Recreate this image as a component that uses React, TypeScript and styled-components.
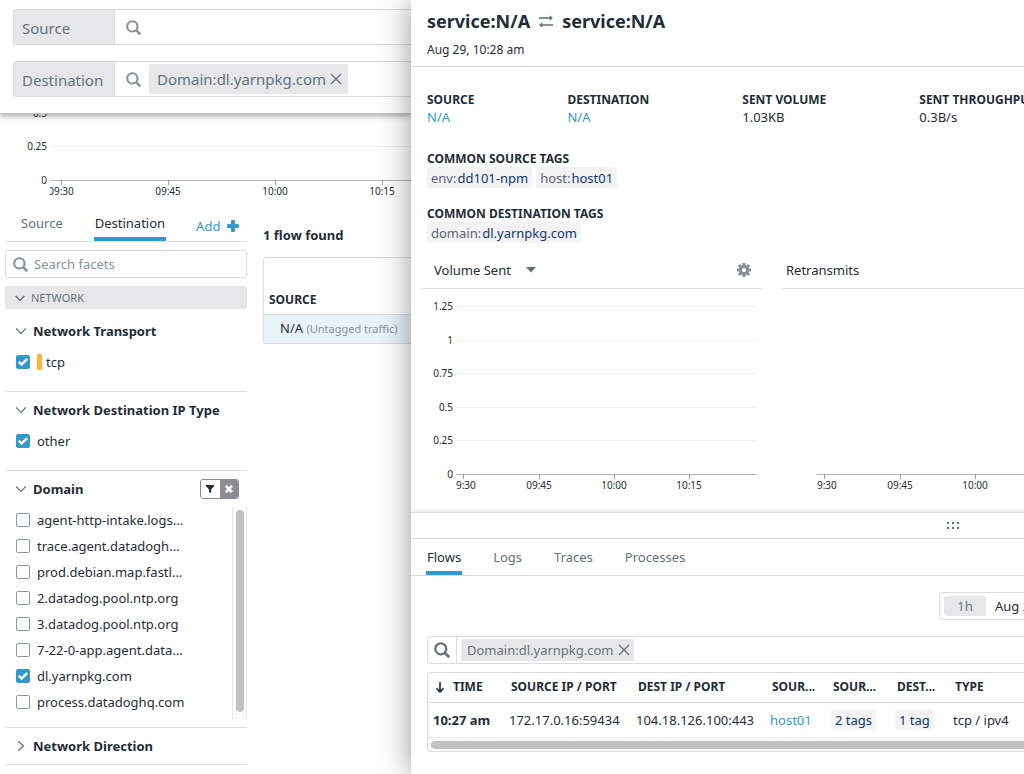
import React from "react";
import styled, { createGlobalStyle, css } from "styled-components";

const ink = "#1f2d36";
const muted = "#65727b";
const faint = "#87929a";
const blue = "#3399cc";
const line = "#dcdcdf";
const fill = "#e7e7ea";

const GlobalStyle = createGlobalStyle`
  *, *::before, *::after { box-sizing: border-box; }
  body {
    margin: 0;
    background: #fff;
    color: ${ink};
    font: 13px/18px "Noto Sans", "Open Sans", sans-serif;
  }
  button, input, select { font: inherit; color: inherit; margin: 0; }
  button { padding: 0; border: 0; background: none; cursor: pointer; }
  a { color: ${blue}; text-decoration: none; }
  h1, h2, h3, p, dl, dd, ul, fieldset { margin: 0; padding: 0; border: 0; }
  svg { display: block; flex: none; }
`;

const Page = styled.div`
  display: grid;
  grid-template-columns: 411px minmax(0, 1fr);
  min-height: 100vh;
  overflow: hidden;
`;

/* ---------- icons ---------- */

const SearchIcon = ({ size = 15, color = faint }: { size?: number; color?: string }) => (
  <svg width={size} height={size} viewBox="0 0 16 16" fill="none" stroke={color} aria-hidden="true">
    <circle cx="6.8" cy="6.8" r="5.5" strokeWidth="2.3" />
    <path d="M10.8 10.8 15.2 15.2" strokeWidth="2.8" />
  </svg>
);

const CloseIcon = ({ size = 12 }: { size?: number }) => (
  <svg width={size} height={size} viewBox="0 0 12 12" fill="none" stroke={muted} strokeWidth="1.3" aria-hidden="true">
    <path d="M1 1 11 11M11 1 1 11" />
  </svg>
);

const Chevron = ({ open = true, small }: { open?: boolean; small?: boolean }) => (
  <svg width="12" height="12" viewBox="0 0 12 12" fill="none" stroke={muted} strokeWidth={small ? 1.5 : 1.3} aria-hidden="true">
    <path d={small ? "M1.8 4 6 8.4 10.2 4" : open ? "M1.2 3.4 6 8.6 10.8 3.4" : "M3.2 1.2 8.4 6 3.2 10.8"} />
  </svg>
);

const PlusIcon = () => (
  <svg width="12" height="12" viewBox="0 0 12 12" fill={blue} aria-hidden="true">
    <rect x="4" y="0" width="4" height="12" rx="1" />
    <rect x="0" y="4" width="12" height="4" rx="1" />
  </svg>
);

const FunnelIcon = () => (
  <svg width="10" height="10" viewBox="0 0 10 10" fill={ink} aria-hidden="true">
    <path d="M1 1h8v1.2L6.2 5.2V9.2L3.9 7.8V5.2L1 2.2z" />
  </svg>
);

const HeavyCross = () => (
  <svg width="8" height="8" viewBox="0 0 8 8" stroke="#fff" strokeWidth="2.6" aria-hidden="true">
    <path d="M.9.9 7.1 7.1M7.1.9.9 7.1" />
  </svg>
);

const SwapIcon = () => (
  <svg width="14" height="14" viewBox="0 0 14 14" aria-hidden="true">
    <g fill="none" stroke={faint} strokeWidth="1.8">
      <path d="M0 4H12M2 11H14" />
    </g>
    <path d="M10.6 1.2 14 4 10.6 6.8zM3.4 8.2 0 11l3.4 2.8z" fill={muted} />
  </svg>
);

const GearIcon = () => (
  <svg width="14" height="14" viewBox="-7 -7 14 14" aria-hidden="true">
    {[0, 45, 90, 135].map((angle) => (
      <rect key={angle} x="-1.5" y="-7" width="3" height="14" rx=".4" fill={faint} transform={`rotate(${angle})`} />
    ))}
    <circle r="5" fill={faint} />
    <circle r="2" fill="#fff" />
  </svg>
);

const GripIcon = () => (
  <svg width="12" height="8" viewBox="0 0 12 8" fill={muted} aria-hidden="true">
    {[0, 5, 10].map((x) => (
      <React.Fragment key={x}>
        <rect x={x} y="0" width="2" height="2" />
        <rect x={x} y="5" width="2" height="2" />
      </React.Fragment>
    ))}
  </svg>
);

const SortArrow = () => (
  <svg width="8" height="11" viewBox="0 0 8 11" fill="none" stroke={ink} strokeWidth="1.6" aria-hidden="true">
    <path d="M4 0V10M.6 6.4 4 9.9 7.4 6.4" />
  </svg>
);

/* ---------- search bars ---------- */

const Background = styled.main`
  display: flex;
  flex-direction: column;
  overflow: hidden;
`;

const QueryBar = styled.header`
  position: relative;
  z-index: 1;
  display: flex;
  flex-direction: column;
  gap: 16px;
  padding: 9px 0 16px 13px;
  background: #fff;
  border-bottom: 1px solid #c4c4c7;
  box-shadow: 0 2px 6px rgba(0, 0, 0, 0.35);
`;

const QueryField = styled.div`
  display: flex;
  height: 36px;
  border: 1px solid ${line};
  border-right: 0;
  border-radius: 3px 0 0 3px;
  align-items: center;
  font-size: 15px;
  color: ${muted};
`;

const QueryLabel = styled.label`
  align-self: stretch;
  display: flex;
  align-items: center;
  width: 101px;
  padding: 2px 0 0 8px;
  margin-right: 11px;
  background: ${fill};
  border-right: 1px solid ${line};
`;

const Chip = styled.span<{ $large?: boolean }>`
  display: flex;
  align-items: center;
  gap: 4px;
  flex: none;
  height: ${(p) => (p.$large ? 30 : 22)}px;
  padding: 0 ${(p) => (p.$large ? "6px 0 8px" : "4px 0 6px")};
  margin-left: ${(p) => (p.$large ? 8 : 4)}px;
  background: ${fill};
  border-radius: 2px;
  color: ${muted};
`;

const BareInput = styled.input`
  flex: 1;
  min-width: 0;
  height: 100%;
  padding: 0 6px;
  border: 0;
  outline: 0;
  background: none;

  &::placeholder {
    color: ${faint};
    opacity: 1;
  }
`;

/* ---------- charts ---------- */

const Plot = styled.svg<{ $height: number }>`
  width: 100%;
  height: ${(p) => p.$height}px;
  overflow: hidden;
  font-size: 10px;

  text {
    fill: ${ink};
  }
`;

type Mark = [number, string];

function AxisPlot({
  height, left, right = 0, rows, ticks, base, label,
}: {
  height: number; left: number; right?: number; rows: Mark[]; ticks: Mark[]; base: number; label: string;
}) {
  return (
    <Plot $height={height} role="img" aria-label={label}>
      {rows.map(([y, text]) => (
        <text key={text} x={left - 3} y={y + 4} textAnchor="end">{text}</text>
      ))}
      <svg x={left} style={{ width: `calc(100% - ${left + right}px)` }} height={height}>
        {rows.map(([y, text]) =>
          y === base ? null : <rect key={text} x="0" y={y} width="100%" height="1" fill="#efeff0" />
        )}
        <rect x="0" y={base} width="100%" height="1" fill="#b4b4b6" />
        {ticks.map(([x, text]) => (
          <React.Fragment key={text}>
            <rect x={x - left} y={base} width="1" height="5" fill="#a0a0a3" />
            <text x={x - left} y={base + 15} textAnchor="middle">{text}</text>
          </React.Fragment>
        ))}
      </svg>
    </Plot>
  );
}

/* ---------- facets ---------- */

const Columns = styled.div`
  display: flex;
  gap: 16px;
  padding-left: 5px;
`;

const Sidebar = styled.aside`
  flex: none;
  width: 242px;
`;

const FacetTabs = styled.nav`
  display: flex;
  height: 37px;
  padding: 0 11px 0 15px;
  gap: 30px;
  border-bottom: 1px solid ${line};
`;

const tabStyle = css<{ $active?: boolean }>`
  padding: 4px 1px 0;
  color: ${(p) => (p.$active ? ink : muted)};
  border-bottom: 4px solid ${(p) => (p.$active ? blue : "transparent")};
`;

const FacetTab = styled.button<{ $active?: boolean }>`
  ${tabStyle}
`;

const AddButton = styled.button`
  display: flex;
  align-items: center;
  gap: 7px;
  padding: 6px 4px 0 0;
  margin-left: auto;
  height: 36px;
  color: ${blue};
  white-space: nowrap;
`;

const FacetSearch = styled.div`
  display: flex;
  align-items: center;
  height: 28px;
  margin: 8px 0;
  padding-left: 7px;
  border: 1px solid ${line};
  border-radius: 3px;
`;

const GroupHeader = styled.button`
  display: flex;
  align-items: center;
  gap: 5px;
  width: 100%;
  height: 23px;
  padding-left: 9px;
  margin-bottom: 4px;
  background: ${fill};
  border-radius: 2px;
  color: ${muted};
  font-size: 11px;
`;

const Facet = styled.section<{ $bottom?: number }>`
  padding-bottom: ${(p) => p.$bottom ?? 0}px;
  border-bottom: 1px solid ${line};
`;

const FacetHead = styled.div`
  display: flex;
  align-items: center;
  justify-content: space-between;
  height: 36px;
  padding: 0 8px 0 10px;
`;

const FacetToggle = styled.button`
  display: flex;
  align-items: center;
  gap: 6px;
  font-weight: 700;
`;

const FacetActions = styled.div`
  display: flex;
  width: 39px;
  height: 20px;
  border: 1px solid #8e8c93;
  border-radius: 3px;
  overflow: hidden;
`;

const FacetAction = styled.button<{ $dark?: boolean }>`
  display: grid;
  place-items: center;
  flex: 1;
  background: ${(p) => (p.$dark ? "#8e8c93" : "#fff")};
`;

const Option = styled.label`
  display: flex;
  align-items: center;
  gap: 7px;
  height: 26px;
  padding-left: 11px;
`;

const Tick = styled.span`
  display: grid;
  flex: none;
  place-items: center;

  > * {
    grid-area: 1 / 1;
  }
  svg {
    pointer-events: none;
  }
`;

const TickInput = styled.input`
  appearance: none;
  width: 14px;
  height: 14px;
  border: 1px solid #8d979e;
  border-radius: 2px;
  background: #fff;

  &:checked {
    border-color: ${blue};
    background: ${blue};
  }
`;

const Swatch = styled.span`
  width: 5px;
  height: 16px;
  margin-right: -3px;
  background: #ffb32e;
  border-radius: 1px;
`;

const OptionScroller = styled.div`
  display: flex;
  justify-content: space-between;
  height: 212px;
`;

const ScrollTrack = styled.div<{ $horizontal?: boolean }>`
  background: #fafafa;
  ${(p) =>
    p.$horizontal
      ? css`
          height: 14px;
          padding: 3px;
          border-top: 1px solid #e8e8e8;
        `
      : css`
          width: 15px;
          padding: 3px 2px 7px 3px;
          border: solid #e8e8e8;
          border-width: 0 1px;
        `}
`;

const ScrollThumb = styled.div`
  height: 100%;
  min-height: 8px;
  background: #c1c1c1;
  border-radius: 4px;
`;

function CheckOption({ name, checked, swatch }: { name: string; checked?: boolean; swatch?: boolean }) {
  return (
    <Option>
      <Tick>
        <TickInput type="checkbox" defaultChecked={checked} />
        <svg width="10" height="8" viewBox="0 0 10 8" fill="none" stroke="#fff" strokeWidth="2.4" aria-hidden="true">
          <path d="M.8 3.8 3.6 6.4 9.2 1" />
        </svg>
      </Tick>
      {swatch && <Swatch />}
      <span>{name}</span>
    </Option>
  );
}

/* ---------- flow list ---------- */

const Results = styled.section`
  flex: 1;
  min-width: 0;
  padding-top: 21px;
`;

const ResultCount = styled.h2`
  font-size: 13px;
  line-height: 18px;
  margin-bottom: 13px;
`;

const ResultBox = styled.div`
  border: 1px solid ${line};
  border-right: 0;
  border-radius: 3px 0 0 3px;
  overflow: hidden;
`;

const ResultTable = styled.table`
  width: 100%;
  border-collapse: collapse;
  text-align: left;

  th {
    height: 56px;
    padding: 0 0 5px 5px;
    vertical-align: bottom;
    font-size: 12px;
    border-bottom: 1px solid ${line};
  }
  td {
    height: 29px;
    padding: 0 0 0 16px;
    background: #e9f3fa;
  }
  small {
    font-size: 11px;
    color: ${faint};
  }
`;

/* ---------- drawer ---------- */

const Drawer = styled.aside`
  position: relative;
  z-index: 2;
  overflow: hidden;
  background: #fff;
  box-shadow: 0 0 30px rgba(0, 0, 0, 0.4);
`;

const DrawerBody = styled.div`
  min-width: 1084px;
`;

const DrawerHead = styled.header`
  padding: 9px 16px 7px;
  border-bottom: 1px solid ${line};
  font-size: 12px;
`;

const Title = styled.h1`
  display: flex;
  align-items: center;
  gap: 9px;
  margin-bottom: 8px;
  font-size: 18px;
  line-height: 24px;
`;

const Summary = styled.div`
  display: flex;
  flex-direction: column;
  gap: 17px;
  padding: 24px 16px 11px;
`;

const Stats = styled.dl`
  display: flex;
  gap: 93px;
  padding-bottom: 7px;
`;

const Caption = styled.dt`
  font-size: 12px;
  line-height: 17px;
  font-weight: 700;
`;

const Tags = styled.dd`
  display: flex;
  gap: 4px;
`;

const Tag = styled.span`
  display: inline-flex;
  align-items: center;
  gap: 1px;
  height: 21px;
  padding: 0 4px;
  background: #f3f3f4;
  border-radius: 3px;
  color: #0f3573;

  i {
    font-style: normal;
    color: #5a6478;
  }
`;

const Charts = styled.div`
  display: grid;
  grid-template-columns: repeat(3, minmax(0, 1fr));
  gap: 20px;
  padding: 0 11px 0 10px;
`;

const ChartHead = styled.div`
  display: flex;
  align-items: center;
  justify-content: space-between;
  height: 35px;
  padding: 0 11px 2px 4px;
  border-bottom: 1px solid ${line};
`;

const MetricPicker = styled.label`
  display: flex;
  align-items: center;

  select {
    appearance: none;
    border: 0;
    padding: 0 7px 0 9px;
    background: none;
    outline: 0;
  }
  svg {
    margin-left: 8px;
  }
`;

const Handle = styled.div`
  display: flex;
  justify-content: center;
  align-items: center;
  height: 27px;
  border: solid ${line};
  border-width: 1px 0;
  box-shadow: 0 -2px 4px rgba(0, 0, 0, 0.08);
`;

const DetailTabs = styled.nav`
  display: flex;
  gap: 30px;
  height: 37px;
  padding-left: 15px;
  border-bottom: 1px solid ${line};
`;

const DetailTab = styled.button<{ $active?: boolean }>`
  ${tabStyle}
`;

const Detail = styled.div`
  padding: 16px 16px 0;
`;

const TimeRange = styled.button`
  display: flex;
  align-items: center;
  gap: 9px;
  width: 540px;
  height: 28px;
  margin: 0 0 16px auto;
  padding: 0 4px;
  border: 1px solid ${line};
  border-radius: 3px;
`;

const Span = styled.span`
  width: 42px;
  padding: 1px 0;
  background: ${fill};
  border-radius: 3px;
  color: ${muted};
`;

const FlowSearch = styled.div`
  display: flex;
  align-items: center;
  height: 28px;
  margin-bottom: 8px;
  border: 1px solid ${line};
  border-radius: 3px;
`;

const FlowSearchIcon = styled.span`
  display: grid;
  place-items: center;
  align-self: stretch;
  width: 29px;
  border-right: 1px solid ${line};
`;

const FlowBox = styled.div`
  border: 1px solid ${line};
  border-radius: 3px;
  overflow: hidden;
`;

const FlowTable = styled.table`
  width: 100%;
  table-layout: fixed;
  border-collapse: collapse;
  text-align: left;

  th, td {
    white-space: nowrap;
    overflow: hidden;
    text-overflow: ellipsis;
  }
  th {
    height: 29px;
    padding: 0 8px;
    font-size: 12px;
    border-bottom: 1px solid ${line};
  }
  td {
    height: 35px;
    padding: 0 6px;
  }
  td:first-child {
    padding: 0 5px;
    font-weight: 700;
  }
`;

const SortHead = styled.button`
  display: flex;
  align-items: center;
  gap: 9px;
  font-weight: 700;
`;

const domains: [string, boolean?][] = [
  ["agent-http-intake.logs..."],
  ["trace.agent.datadogh..."],
  ["prod.debian.map.fastl..."],
  ["2.datadog.pool.ntp.org"],
  ["3.datadog.pool.ntp.org"],
  ["7-22-0-app.agent.data..."],
  ["dl.yarnpkg.com", true],
  ["process.datadoghq.com"],
];

const plotTicks: Mark[] = [[42, "09:30"], [118, "09:45"], [193, "10:00"], [268, "10:15"]];
const volumeRows: Mark[] = [[17, "1.25"], [51, "1"], [84, "0.75"], [118, "0.5"], [151, "0.25"], [185, "0"]];

const flowColumns: [string, number | undefined][] = [
  ["SOURCE IP / PORT", 127],
  ["DEST IP / PORT", 134],
  ["SOUR...", 61],
  ["SOUR...", 64],
  ["DEST...", 58],
  ["TYPE", undefined],
];

function DomainChip({ large }: { large?: boolean }) {
  return (
    <Chip $large={large}>
      Domain:dl.yarnpkg.com
      <button type="button" aria-label="Remove filter">
        <CloseIcon size={12} />
      </button>
    </Chip>
  );
}

export default function App() {
  return (
    <Page>
      <GlobalStyle />
      <Background>
        <QueryBar>
          <QueryField>
            <QueryLabel htmlFor="source">Source</QueryLabel>
            <SearchIcon />
            <BareInput id="source" />
          </QueryField>
          <QueryField>
            <QueryLabel htmlFor="destination">Destination</QueryLabel>
            <SearchIcon />
            <DomainChip large />
            <BareInput id="destination" />
          </QueryField>
        </QueryBar>
        <AxisPlot
          label="Volume over time"
          height={91}
          left={50}
          base={66}
          rows={[[-1, "0.5"], [32, "0.25"], [66, "0"]]}
          ticks={[[61, "09:30"], [168, "09:45"], [275, "10:00"], [382, "10:15"]]}
        />
        <Columns>
          <Sidebar>
            <FacetTabs>
              <FacetTab type="button">Source</FacetTab>
              <FacetTab type="button" $active>Destination</FacetTab>
              <AddButton type="button">Add <PlusIcon /></AddButton>
            </FacetTabs>
            <FacetSearch>
              <SearchIcon />
              <BareInput placeholder="Search facets" aria-label="Search facets" />
            </FacetSearch>
            <GroupHeader type="button"><Chevron small /> NETWORK</GroupHeader>
            <Facet $bottom={16}>
              <FacetHead><FacetToggle type="button"><Chevron /> Network Transport</FacetToggle></FacetHead>
              <CheckOption name="tcp" checked swatch />
            </Facet>
            <Facet $bottom={16}>
              <FacetHead><FacetToggle type="button"><Chevron /> Network Destination IP Type</FacetToggle></FacetHead>
              <CheckOption name="other" checked />
            </Facet>
            <Facet $bottom={8}>
              <FacetHead>
                <FacetToggle type="button"><Chevron /> Domain</FacetToggle>
                <FacetActions>
                  <FacetAction type="button" aria-label="Filter"><FunnelIcon /></FacetAction>
                  <FacetAction type="button" aria-label="Clear" $dark><HeavyCross /></FacetAction>
                </FacetActions>
              </FacetHead>
              <OptionScroller>
                <div>
                  {domains.map(([name, checked]) => <CheckOption key={name} name={name} checked={checked} />)}
                </div>
                <ScrollTrack><ScrollThumb /></ScrollTrack>
              </OptionScroller>
            </Facet>
            <Facet>
              <FacetHead><FacetToggle type="button"><Chevron open={false} /> Network Direction</FacetToggle></FacetHead>
            </Facet>
          </Sidebar>
          <Results>
            <ResultCount>1 flow found</ResultCount>
            <ResultBox>
              <ResultTable>
                <thead><tr><th>SOURCE</th></tr></thead>
                <tbody><tr><td>N/A <small>(Untagged traffic)</small></td></tr></tbody>
              </ResultTable>
            </ResultBox>
          </Results>
        </Columns>
      </Background>

      <Drawer>
        <DrawerBody>
          <DrawerHead>
            <Title>service:N/A <SwapIcon /> service:N/A</Title>
            <p>Aug 29, 10:28 am</p>
          </DrawerHead>
          <Summary>
            <Stats>
              <div><Caption>SOURCE</Caption><dd><a href="#source-service">N/A</a></dd></div>
              <div><Caption>DESTINATION</Caption><dd><a href="#destination-service">N/A</a></dd></div>
              <div><Caption>SENT VOLUME</Caption><dd>1.03KB</dd></div>
              <div><Caption>SENT THROUGHPUT</Caption><dd>0.3B/s</dd></div>
            </Stats>
            <dl>
              <Caption>COMMON SOURCE TAGS</Caption>
              <Tags>
                <Tag><i>env:</i>dd101-npm</Tag>
                <Tag><i>host:</i>host01</Tag>
              </Tags>
            </dl>
            <dl>
              <Caption>COMMON DESTINATION TAGS</Caption>
              <Tags><Tag><i>domain:</i>dl.yarnpkg.com</Tag></Tags>
            </dl>
          </Summary>
          <Charts>
            <section>
              <ChartHead>
                <MetricPicker>
                  <select aria-label="Metric"><option>Volume Sent</option></select>
                  <svg width="10" height="6" viewBox="0 0 10 6" fill={muted} aria-hidden="true"><path d="M0 0H10L5 5.6z" /></svg>
                </MetricPicker>
                <button type="button" aria-label="Chart settings"><GearIcon /></button>
              </ChartHead>
              <AxisPlot label="Volume Sent" height={223} left={35} right={5} base={185} rows={volumeRows} ticks={plotTicks} />
            </section>
            <section>
              <ChartHead>Retransmits</ChartHead>
              <AxisPlot label="Retransmits" height={223} left={35} right={5} base={185} rows={[]} ticks={plotTicks} />
            </section>
          </Charts>
          <Handle><GripIcon /></Handle>
          <DetailTabs>
            <DetailTab type="button" $active>Flows</DetailTab>
            <DetailTab type="button">Logs</DetailTab>
            <DetailTab type="button">Traces</DetailTab>
            <DetailTab type="button">Processes</DetailTab>
          </DetailTabs>
          <Detail>
            <TimeRange type="button"><Span>1h</Span>Aug 29</TimeRange>
            <FlowSearch>
              <FlowSearchIcon><SearchIcon size={16} color={muted} /></FlowSearchIcon>
              <DomainChip />
              <BareInput aria-label="Filter flows" />
            </FlowSearch>
            <FlowBox>
              <FlowTable>
                <colgroup>
                  <col width="75" />
                  {flowColumns.map(([, width], i) => <col key={i} width={width} />)}
                </colgroup>
                <thead>
                  <tr>
                    <th><SortHead type="button"><SortArrow />TIME</SortHead></th>
                    {flowColumns.map(([name], i) => <th key={i}>{name}</th>)}
                  </tr>
                </thead>
                <tbody>
                  <tr>
                    <td>10:27 am</td>
                    <td>172.17.0.16:59434</td>
                    <td>104.18.126.100:443</td>
                    <td><a href="#host01">host01</a></td>
                    <td><Tag>2 tags</Tag></td>
                    <td><Tag>1 tag</Tag></td>
                    <td>tcp / ipv4</td>
                  </tr>
                </tbody>
              </FlowTable>
              <ScrollTrack $horizontal><ScrollThumb /></ScrollTrack>
            </FlowBox>
          </Detail>
        </DrawerBody>
      </Drawer>
    </Page>
  );
}
